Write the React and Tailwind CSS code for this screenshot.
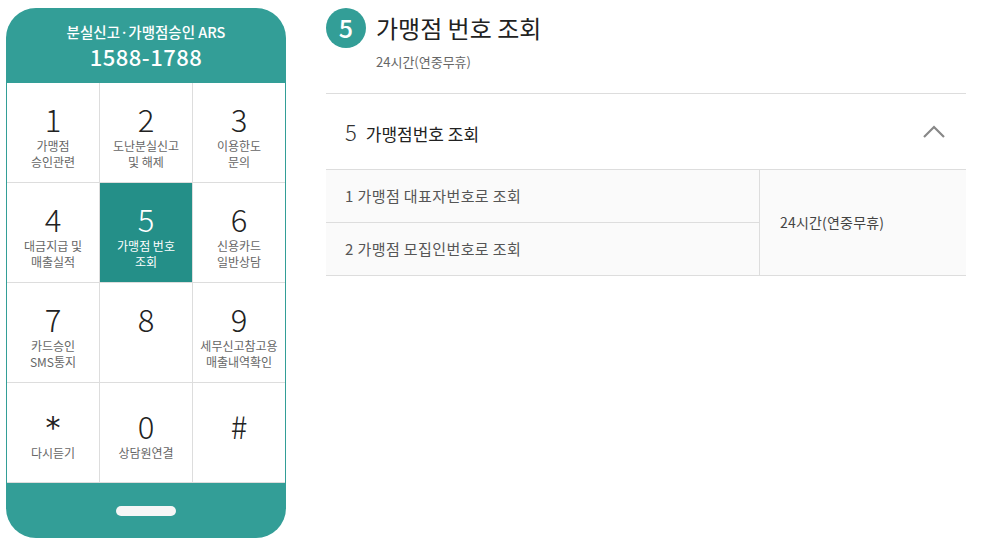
import React from 'react';

const FONT = { fontFamily: '"Noto Sans CJK KR", "Noto Sans", sans-serif' };

const keys = [
    { num: '1', label: ['가맹점', '승인관련'] },
    { num: '2', label: ['도난분실신고', '및 해제'] },
    { num: '3', label: ['이용한도', '문의'] },
    { num: '4', label: ['대금지급 및', '매출실적'] },
    { num: '5', label: ['가맹점 번호', '조회'], active: true },
    { num: '6', label: ['신용카드', '일반상담'] },
    { num: '7', label: ['카드승인', 'SMS통지'] },
    { num: '8', label: [] },
    { num: '9', label: ['세무신고참고용', '매출내역확인'] },
    { num: '*', label: ['다시듣기'], last: true },
    { num: '0', label: ['상담원연결'], last: true },
    { num: '#', label: [], last: true },
];

function Key({ item }) {
    const star = item.num === '*';
    return (
        <div
            className={`flex flex-col items-center h-[99px] ${item.last ? 'pt-[25px]' : 'pt-[18px]'} ${
                item.active ? 'bg-[#248f88] text-white' : 'bg-white text-[#222]'
            }`}
        >
            <div
                className={`h-[36px] leading-[36px] ${star ? 'text-[30px]' : 'text-[31px] font-light'}`}
                style={star ? { fontFamily: '"DejaVu Sans", sans-serif', lineHeight: '40px' } : undefined}
            >
                {item.num}
            </div>
            <div
                className={`mt-[1px] text-[12px] leading-[16px] text-center ${
                    item.active ? 'text-white' : 'text-[#666]'
                }`}
            >
                {item.label.map((l) => (
                    <div key={l}>{l}</div>
                ))}
            </div>
        </div>
    );
}

function Phone() {
    return (
        <div className="w-[280px] shrink-0 rounded-[30px] bg-[#339e97] overflow-hidden px-px">
            <div className="h-[75px] flex flex-col items-center justify-center text-white">
                <div className="text-[14.5px] leading-[20px] font-medium mt-[1px]">분실신고·가맹점승인 ARS</div>
                <div className="text-[22px] leading-[28px] font-medium tracking-[0.5px]">1588-1788</div>
            </div>
            <div className="grid grid-cols-3 gap-px bg-[#dddddd] pb-px">
                {keys.map((k) => (
                    <Key key={k.num} item={k} />
                ))}
            </div>
            <div className="h-[55px] flex items-center justify-center">
                <div className="w-[60px] h-[10px] rounded-full bg-[#f6f6f6]" />
            </div>
        </div>
    );
}

export default function App() {
    return (
        <div className="flex items-start gap-[40px] pl-[6px] pt-[8px] bg-white min-h-[546px] text-[#222]" style={FONT}>
            <Phone />
            <div className="w-[640px]">
                <div className="flex items-center gap-[10px]">
                    <div className="w-[40px] h-[40px] rounded-full bg-[#339e97] text-white flex items-center justify-center text-[25px] font-medium">
                        5
                    </div>
                    <h2 className="text-[24px] leading-[40px] font-normal text-[#222]">가맹점 번호 조회</h2>
                </div>
                <p className="pl-[50px] mt-[4px] text-[13px] leading-[20px] text-[#666]">24시간(연중무휴)</p>

                <div className="mt-[21px] border-t border-[#dddddd]">
                    <div className="h-[76px] flex items-center justify-between pl-[19px] pr-[21px] border-b border-[#dddddd]">
                        <div className="flex items-baseline gap-[9px]">
                            <span className="text-[22px] font-light text-[#333]">5</span>
                            <span className="text-[17px] text-[#222]">가맹점번호 조회</span>
                        </div>
                        <svg width="22" height="13" viewBox="0 0 22 13" fill="none">
                            <path d="M1 12L11 2L21 12" stroke="#888" strokeWidth="2.2" />
                        </svg>
                    </div>
                    <div className="flex bg-[#fafafa] border-b border-[#dddddd]">
                        <div className="w-[434px] border-r border-[#dddddd]">
                            <div className="h-[53px] flex items-center pl-[19px] text-[15px] tracking-[0.4px] text-[#555] border-b border-[#dddddd]">
                                1 가맹점 대표자번호로 조회
                            </div>
                            <div className="h-[52px] flex items-center pl-[19px] text-[15px] tracking-[0.4px] text-[#555]">
                                2 가맹점 모집인번호로 조회
                            </div>
                        </div>
                        <div className="flex-1 flex items-center pl-[20px] text-[14px] tracking-[0.2px] text-[#444]">
                            24시간(연중무휴)
                        </div>
                    </div>
                </div>
            </div>
        </div>
    );
}
